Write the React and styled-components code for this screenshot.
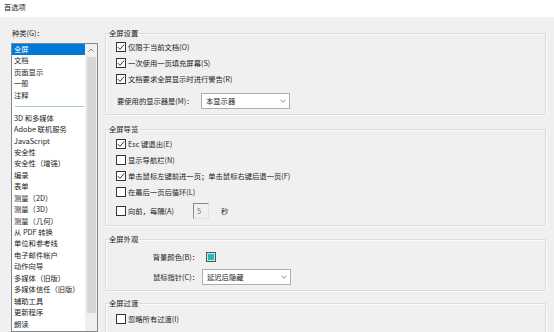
import React from 'react';
import styled, { createGlobalStyle } from 'styled-components';

const GlobalStyle = createGlobalStyle`
  html, body {
    margin: 0;
    padding: 0;
    background: #f0f0f0;
  }
  body {
    font-family: "Noto Sans CJK SC", "Microsoft YaHei", sans-serif;
    font-size: 7.3px;
    color: #1a1a1a;
  }
`;

const categories = [
  '3D 和多媒体', 'Adobe 联机服务', 'JavaScript', '安全性', '安全性（增强）', '编录', '表单',
  '测量（2D）', '测量（3D）', '测量（几何）', '从 PDF 转换', '单位和参考线', '电子邮件帐户',
  '动作向导', '多媒体（旧版）', '多媒体信任（旧版）', '辅助工具', '更新程序', '朗读', '内容编辑',
];

const Window = styled.div`
  width: 554px;
  height: 332px;
  overflow: hidden;
  background: #f0f0f0;
  display: flex;
  flex-direction: column;
`;

const TitleBar = styled.div`
  height: 17px;
  flex-shrink: 0;
  background: #fff;
  padding: 2px 0 0 4px;
  box-sizing: border-box;
  line-height: 10px;
`;

const Main = styled.div`
  display: flex;
  gap: 7px;
  padding-left: 11px;
  flex: 1;
  min-height: 0;
`;

const LeftCol = styled.div`
  width: 87px;
  padding-top: 11px;
  display: flex;
  flex-direction: column;
`;

const FieldLabel = styled.div`
  height: 10px;
  line-height: 10px;
  padding-left: 1px;
  margin-bottom: 5px;
`;

const ListBox = styled.div`
  flex: 1;
  border: 1px solid #828790;
  background: #fff;
  display: flex;
  overflow: hidden;
`;

const Items = styled.div`
  flex: 1;
  min-width: 0;
`;

const Item = styled.div`
  height: 11.45px;
  line-height: 11.45px;
  padding-left: 2px;
  white-space: nowrap;
  background: ${p => (p.$selected ? '#0078d7' : 'transparent')};
  color: ${p => (p.$selected ? '#fff' : '#1a1a1a')};
`;

const Separator = styled.div`
  height: 11.45px;
  display: flex;
  align-items: center;
  padding: 0 1px 0 3px;

  &::after {
    content: '';
    flex: 1;
    height: 1px;
    background: #a3c9d3;
  }
`;

const ScrollBar = styled.div`
  width: 12px;
  background: #f0f0f0;
  display: flex;
  flex-direction: column;
  align-items: center;
`;

const ScrollArrow = styled.div`
  height: 12px;
  display: flex;
  align-items: center;
  justify-content: center;
  color: #606060;
`;

const Thumb = styled.div`
  width: 9px;
  height: 256px;
  margin-top: 1px;
  background: #d6d6d6;
`;

const RightCol = styled.div`
  width: 441px;
  padding-top: 16px;
  display: flex;
  flex-direction: column;
`;

const Group = styled.div`
  position: relative;
  border: 1px solid #dcdcdc;
  box-shadow: inset 1px 1px 0 #fafafa, 1px 1px 0 #fafafa;
  margin-top: ${p => p.$gap || 0}px;
  padding: ${p => p.$pad || '5px 0 5px 10px'};
  display: flex;
  flex-direction: column;
`;

const Legend = styled.div`
  position: absolute;
  top: -6px;
  left: 2px;
  padding: 0 1px;
  line-height: 10px;
  background: #f0f0f0;
`;

const CheckRow = styled.label`
  height: 16px;
  display: flex;
  align-items: center;
  gap: 2px;
  white-space: nowrap;
  margin-top: ${p => p.$gap || 0}px;
`;

const Box = styled.span`
  width: 10px;
  height: 10px;
  box-sizing: border-box;
  border: 1px solid #333;
  background: #fff;
  display: flex;
  align-items: center;
  justify-content: center;
  flex-shrink: 0;
`;

const FormRow = styled.div`
  height: 16px;
  display: flex;
  align-items: center;
  padding-left: 1px;
  margin-top: ${p => p.$gap || 0}px;
`;

const RowLabel = styled.span`
  width: ${p => p.$width}px;
  text-align: ${p => p.$align || 'left'};
  padding-right: ${p => (p.$align === 'right' ? 3 : 0)}px;
  box-sizing: border-box;
  white-space: nowrap;
`;

const Select = styled.div`
  width: 89px;
  height: 16px;
  box-sizing: border-box;
  border: 1px solid #adadad;
  background: #fff;
  display: flex;
  align-items: center;
  justify-content: space-between;
  padding: 0 3px 0 4px;
  color: #1a1a1a;
`;

const NumberBox = styled.span`
  width: 16px;
  height: 16px;
  box-sizing: border-box;
  border-left: 1px solid #8a8a8a;
  border-top: 1px solid #8a8a8a;
  border-right: 1px solid #e3e3e3;
  border-bottom: 1px solid #e3e3e3;
  color: #777;
  padding-left: 3px;
  line-height: 14px;
  margin-left: ${p => p.$offset}px;
`;

const Unit = styled.span`
  margin-left: 10px;
`;

const Swatch = styled.span`
  width: 10px;
  height: 10px;
  box-sizing: border-box;
  border: 1px solid #3d5f63;
  background: #34b3b3;
  box-shadow: inset 0 0 0 1px #bfe8e8;
  margin-left: 4px;
`;

const Check = () => (
  <svg width="8" height="8" viewBox="0 0 8 8">
    <path d="M1 4.2 L3.1 6.3 L7 1.6" fill="none" stroke="#333" strokeWidth="1" />
  </svg>
);

const Chevron = ({ up }) => (
  <svg width="6" height="4" viewBox="0 0 6 4">
    <path d={up ? 'M0.5 3.5 L3 1 L5.5 3.5' : 'M0.5 0.8 L3 3.2 L5.5 0.8'} fill="none" stroke="#7a7a7a" strokeWidth="0.9" />
  </svg>
);

const CheckItem = ({ checked, children, gap }) => (
  <CheckRow $gap={gap}>
    <Box>{checked && <Check />}</Box>
    {children}
  </CheckRow>
);

export default function App() {
  return (
    <Window>
      <GlobalStyle />
      <TitleBar>首选项</TitleBar>
      <Main>
        <LeftCol>
          <FieldLabel>种类(G)：</FieldLabel>
          <ListBox>
            <Items>
              <Item $selected>全屏</Item>
              <Item>文档</Item>
              <Item>页面显示</Item>
              <Item>一般</Item>
              <Item>注释</Item>
              <Separator />
              {categories.map(c => (
                <Item key={c}>{c}</Item>
              ))}
            </Items>
            <ScrollBar>
              <ScrollArrow>
                <Chevron up />
              </ScrollArrow>
              <Thumb />
            </ScrollBar>
          </ListBox>
        </LeftCol>

        <RightCol>
          <Group $pad="5px 0 5px 10px">
            <Legend>全屏设置</Legend>
            <CheckItem checked>仅限于当前文档(O)</CheckItem>
            <CheckItem checked>一次使用一页填充屏幕(S)</CheckItem>
            <CheckItem checked>文档要求全屏显示时进行警告(R)</CheckItem>
            <FormRow $gap={6}>
              <RowLabel $width={84}>要使用的显示器是(M)：</RowLabel>
              <Select>
                本显示器
                <Chevron />
              </Select>
            </FormRow>
          </Group>

          <Group $gap={14} $pad="6px 0 6px 10px">
            <Legend>全屏导览</Legend>
            <CheckItem checked>Esc 键退出(E)</CheckItem>
            <CheckItem>显示导航栏(N)</CheckItem>
            <CheckItem checked>单击鼠标左键前进一页；单击鼠标右键后退一页(F)</CheckItem>
            <CheckItem>在最后一页后循环(L)</CheckItem>
            <CheckItem gap={3}>
              <RowLabel $width={63}>向前，每隔(A)</RowLabel>
              <NumberBox $offset={0}>5</NumberBox>
              <Unit>秒</Unit>
            </CheckItem>
          </Group>

          <Group $gap={13} $pad="9px 0 5px 10px">
            <Legend>全屏外观</Legend>
            <FormRow>
              <RowLabel $width={85} $align="right">背景颜色(B)：</RowLabel>
              <Swatch />
            </FormRow>
            <FormRow $gap={4}>
              <RowLabel $width={85} $align="right">鼠标指针(C)：</RowLabel>
              <Select>
                延迟后隐藏
                <Chevron />
              </Select>
            </FormRow>
          </Group>

          <Group $gap={12} $pad="7px 0 8px 10px">
            <Legend>全屏过渡</Legend>
            <CheckItem>忽略所有过渡(I)</CheckItem>
          </Group>
        </RightCol>
      </Main>
    </Window>
  );
}
